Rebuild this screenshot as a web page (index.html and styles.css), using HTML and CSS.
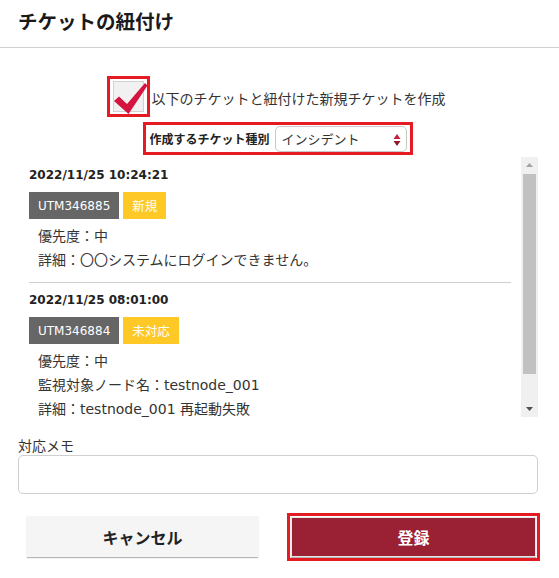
FILE: index.html
```html
<!DOCTYPE html>
<html lang="ja">
<head>
<meta charset="utf-8">
<link rel="stylesheet" href="styles.css">
</head>
<body>
<div class="header"><h1 class="title">チケットの紐付け</h1></div>
<div class="content">
  <div class="check-row">
    <span class="check-mark-wrap">
      <span class="check-box"></span>
      <svg class="check-svg" width="40" height="40" viewBox="0 0 40 40"><polygon points="4,22 9,17.5 17,25 35,4 37.5,6.5 18.5,35" fill="#d4143f"/></svg>
    </span>
    <span class="check-label">以下のチケットと紐付けた新規チケットを作成</span>
  </div>
  <div class="type-row">
    <div class="type-box">
      <span class="type-label">作成するチケット種別</span>
      <span class="select">インシデント<svg class="sel-arrows" width="8" height="14" viewBox="0 0 8 14"><polygon points="4,1 7.5,6 0.5,6" fill="#c4203c"/><polygon points="0.5,8 7.5,8 4,13" fill="#8e1a2e"/></svg></span>
    </div>
  </div>
  <div class="list">
    <div class="entries">
      <div class="entry">
        <div class="date">2022/11/25 10:24:21</div>
        <div class="tags"><span class="tag id">UTM346885</span><span class="tag status">新規</span></div>
        <div class="line">優先度：中</div>
        <div class="line">詳細：〇〇システムにログインできません。</div>
      </div>
      <div class="entry second">
        <div class="date">2022/11/25 08:01:00</div>
        <div class="tags"><span class="tag id">UTM346884</span><span class="tag status">未対応</span></div>
        <div class="line">優先度：中</div>
        <div class="line">監視対象ノード名：testnode_001</div>
        <div class="line">詳細：testnode_001 再起動失敗</div>
      </div>
    </div>
    <div class="scrollbar">
      <svg class="sb-arrow" width="17" height="16" viewBox="0 0 17 16"><polygon points="8.5,6 12,10 5,10" fill="#a3a3a3"/></svg>
      <div class="sb-thumb"></div>
      <svg class="sb-arrow" width="17" height="16" viewBox="0 0 17 16"><polygon points="5,6 12,6 8.5,10" fill="#505050"/></svg>
    </div>
  </div>
  <div class="memo-label">対応メモ</div>
  <div class="memo"></div>
</div>
<div class="buttons">
  <button class="btn cancel">キャンセル</button>
  <button class="btn submit">登録</button>
</div>
</body>
</html>
```
FILE: styles.css
```css
html, body {
  margin: 0;
  padding: 0;
  background: #fff;
}
body {
  font-family: "DejaVu Sans", "Noto Sans CJK JP", sans-serif;
  color: #333;
  width: 559px;
  height: 578px;
  overflow: hidden;
}
.header {
  height: 48px;
  border-bottom: 1px solid #d0d0d0;
  box-sizing: border-box;
  padding-left: 18px;
  display: flex;
  align-items: center;
}
.title {
  margin: 0;
  font-family: "Noto Sans CJK JP", sans-serif;
  font-size: 19.5px;
  font-weight: bold;
  color: #1a1a1a;
  line-height: 28px;
  margin-top: -6px;
}
.content {
  padding: 0 21px 0 18px;
}
.check-row {
  margin-top: 28px;
  display: flex;
  align-items: center;
  justify-content: center;
  padding-right: 4px;
}
.check-mark-wrap {
  position: relative;
  width: 37px;
  height: 35px;
  border: 3px solid #e51b24;
  display: flex;
  align-items: center;
  justify-content: center;
}
.check-box {
  width: 31px;
  height: 31px;
  box-sizing: border-box;
  border: 1px solid #d2d2d2;
  background: #f1f1f1;
}
.check-svg {
  position: absolute;
  left: 0;
  top: 0;
}
.check-label {
  font-family: "Noto Sans CJK JP", sans-serif;
  font-size: 14px;
  line-height: 20px;
  margin-left: 2px;
  margin-top: 2px;
  color: #333;
}
.type-row {
  display: flex;
  justify-content: center;
  margin-top: 5px;
  padding-left: 0;
}
.type-box {
  border: 3px solid #e51b24;
  height: 27px;
  display: flex;
  align-items: center;
  padding: 0 3px 0 3px;
}
.type-label {
  font-family: "Noto Sans CJK JP", sans-serif;
  font-size: 12px;
  font-weight: bold;
  color: #222;
  margin-right: 5px;
  line-height: 16px;
}
.select {
  font-family: "Noto Sans CJK JP", sans-serif;
  width: 132px;
  height: 26px;
  box-sizing: border-box;
  border: 1px solid #c8c8c8;
  border-radius: 5px;
  display: flex;
  align-items: center;
  padding-left: 6px;
  font-size: 13px;
  line-height: 18px;
  color: #333;
  position: relative;
}
.sel-arrows {
  position: absolute;
  right: 5px;
  top: 6px;
}
.list {
  margin-top: 2px;
  height: 262px;
  display: flex;
  overflow: hidden;
}
.entries {
  flex: 1;
  padding: 0 10px 0 11px;
  overflow: hidden;
}
.entry {
  padding-top: 8px;
  padding-bottom: 10px;
  border-bottom: 1px solid #cfcfcf;
}
.entry.second {
  padding-top: 7px;
  border-bottom: none;
}
.date {
  font-size: 12px;
  font-weight: bold;
  line-height: 20px;
  color: #222;
}
.tags {
  display: flex;
  gap: 4px;
  margin-top: 7px;
  margin-bottom: 5px;
}
.tag {
  height: 27px;
  display: flex;
  align-items: center;
  padding: 0 9px;
  font-size: 12px;
  color: #fff;
}
.tag.status {
  font-family: "Noto Sans CJK JP", sans-serif;
  font-size: 12.5px;
  background: #fec826;
}
.tag.id {
  background: #666;
}
.line {
  font-size: 14px;
  line-height: 24px;
  padding-left: 9px;
  color: #333;
}
.scrollbar {
  width: 17px;
  height: 260px;
  background: #f0f0f0;
  display: flex;
  flex-direction: column;
}
.sb-arrow {
  display: block;
  flex: none;
}
.sb-thumb {
  height: 200px;
  margin: 1px 2px 0 2px;
  background: #c1c1c1;
}
.scrollbar .sb-arrow:last-child {
  margin-top: auto;
}
.memo-label {
  font-family: "Noto Sans CJK JP", sans-serif;
  margin-top: 16px;
  font-size: 14px;
  line-height: 20px;
  color: #333;
}
.memo {
  margin-top: 0;
  height: 39px;
  border: 1px solid #cfcfcf;
  border-radius: 5px;
  box-sizing: border-box;
}
.buttons {
  display: flex;
  padding-left: 27px;
  margin-top: 22px;
  gap: 33px;
}
.btn {
  font-family: "Noto Sans CJK JP", sans-serif;
  font-size: 16px;
  font-weight: bold;
  height: 41px;
  border: none;
  padding: 0;
  cursor: pointer;
}
.cancel {
  width: 231px;
  background: #f5f5f5;
  color: #222;
  box-shadow: 0 1px 1px 0 #b5b5b5;
}
.submit {
  width: 245px;
  height: 40px;
  margin-top: 1px;
  background: #9a2034;
  color: #fff;
  border: 1px solid #e8e8e8;
  box-shadow: 0 1px 1px 0 #b5b5b5;
  outline: 3px solid #e51b24;
  outline-offset: 1px;
}
```
